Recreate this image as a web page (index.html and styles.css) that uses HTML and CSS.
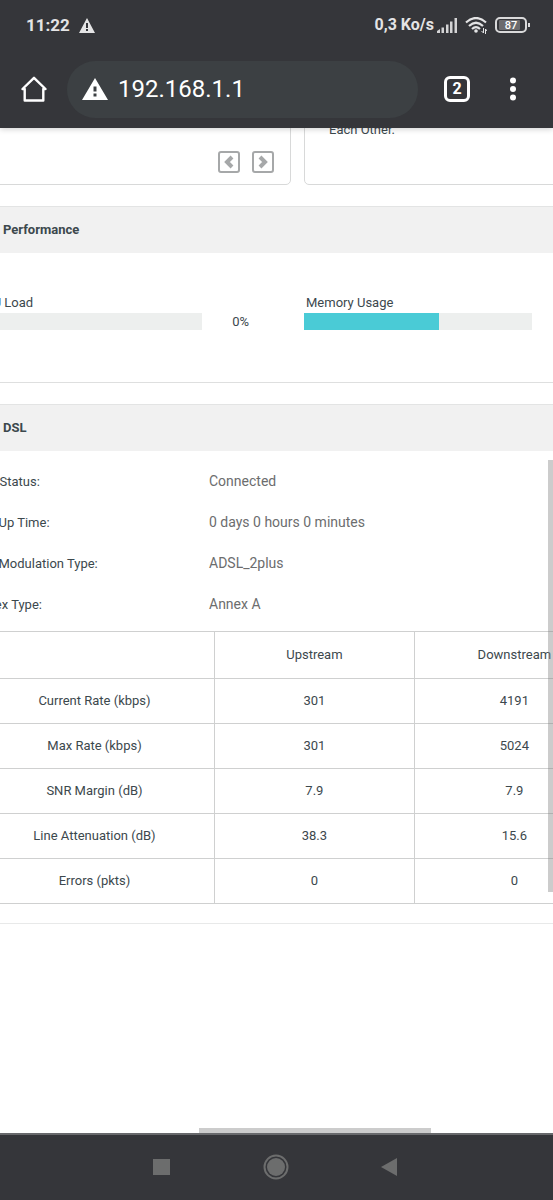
FILE: index.html
```html
<!DOCTYPE html>
<html lang="en">
  <head>
    <meta charset="UTF-8" />
    <meta name="viewport" content="width=device-width, initial-scale=1.0" />
    <title>192.168.1.1</title>
    <link rel="stylesheet" href="styles.css">
  </head>
  <body>
    <header class="browser">
      <div class="status-bar">
        <span>11:22</span>
        <svg class="status-warning" width="16" height="15" viewBox="0 0 16 15">
          <path fill="#e4e4e5" fill-rule="evenodd" d="M8 0 16 15H0zM7 5v5h2V5zM7 11v2h2v-2z" />
        </svg>
        <span class="speed">0,3 Ko/s</span>
        <svg class="signal" width="20" height="15" viewBox="0 0 20 15" fill="#d4d4d5">
          <path d="M0 15v-2l3-2v4zM4.500 9.500h2.500V15H4.500zM9 6.500h2.500V15H9zM13 3.500h2.500V15H13zM17.500 0H20v15h-2.500z" />
        </svg>
        <svg class="wifi" width="22" height="17" viewBox="0 0 22 17" fill="none" stroke="#e4e4e5" stroke-width="2.200">
          <path d="M1 5.500Q11-3.500 21 5.500M4 9Q11 2.500 18 9M7 12Q11 8.300 15 12" />
          <circle cx="11" cy="14" r="1.800" fill="#e4e4e5" stroke="none" />
          <path stroke-width="1" d="M18.500 11v5l-2-2M20.500 17v-5l1.500 2" />
        </svg>
        <svg class="battery" width="36" height="16" viewBox="0 0 36 16">
          <rect x="1" y="1" width="30" height="14" rx="4" fill="none" stroke="#d9d9da" stroke-width="2" />
          <rect x="4" y="3" width="21" height="10" rx="1" fill="#6b6b6e" />
          <path fill="#d9d9da" d="M33 6h2v4h-2z" />
          <text x="16" y="12" text-anchor="middle">87</text>
        </svg>
      </div>

      <div class="toolbar">
        <button class="icon-btn" aria-label="Home">
          <svg width="26" height="26" viewBox="0 0 26 26" fill="none" stroke="#fff" stroke-width="2.400" stroke-linejoin="round">
            <path d="M1.500 13 13 1.800 24.500 13H22.300V24.500H3.700V13z" />
          </svg>
        </button>
        <div class="address">
          <svg width="26" height="22" viewBox="0 0 26 22">
            <path fill="#fff" fill-rule="evenodd" d="M13 0 26 22H0zM11.500 8.500v5h3v-5zM11.500 15.500v3h3v-3z" />
          </svg>
          <input type="text" value="192.168.1.1" aria-label="Address" />
        </div>
        <button class="icon-btn tabs" aria-label="Open tabs">2</button>
        <button class="icon-btn" aria-label="More">
          <svg width="26" height="26" viewBox="0 0 26 26" fill="#fff">
            <circle cx="13" cy="4.500" r="3" />
            <circle cx="13" cy="13" r="3" />
            <circle cx="13" cy="21.500" r="3" />
          </svg>
        </button>
      </div>
    </header>

    <main class="viewport">
      <div class="page">
        <div class="cards">
          <div class="card pager">
            <button class="page-btn" aria-label="Previous">
              <svg width="22" height="22" viewBox="0 0 22 22" fill="none" stroke="#a6a8a9">
                <rect x="1" y="1" width="20" height="20" rx="2" stroke-width="2" />
                <path stroke-width="4" d="M14 6 9 11l5 5" />
              </svg>
            </button>
            <button class="page-btn" aria-label="Next">
              <svg width="22" height="22" viewBox="0 0 22 22" fill="none" stroke="#a6a8a9">
                <rect x="1" y="1" width="20" height="20" rx="2" stroke-width="2" />
                <path stroke-width="4" d="m8 6 5 5-5 5" />
              </svg>
            </button>
          </div>
          <div class="card">Each Other.</div>
        </div>

        <section>
          <h2>Performance</h2>
          <div class="usage-list">
            <div class="usage">
              <span class="usage-label">CPU Load</span>
              <div class="bar"></div>
              <span class="percent">0%</span>
            </div>
            <div class="usage">
              <span class="usage-label">Memory Usage</span>
              <div class="bar"><div class="fill" style="width: 59%"></div></div>
            </div>
          </div>
        </section>

        <section>
          <h2>DSL</h2>
          <dl>
            <dt>Line Status:</dt>
            <dd>Connected</dd>
            <dt>DSL Up Time:</dt>
            <dd>0 days 0 hours 0 minutes</dd>
            <dt>DSL Modulation Type:</dt>
            <dd>ADSL_2plus</dd>
            <dt>Annex Type:</dt>
            <dd>Annex A</dd>
          </dl>

          <table>
            <thead>
              <tr>
                <th class="name-col"></th>
                <th>Upstream</th>
                <th>Downstream</th>
              </tr>
            </thead>
            <tbody>
              <tr>
                <td>Current Rate (kbps)</td>
                <td>301</td>
                <td>4191</td>
              </tr>
              <tr>
                <td>Max Rate (kbps)</td>
                <td>301</td>
                <td>5024</td>
              </tr>
              <tr>
                <td>SNR Margin (dB)</td>
                <td>7.9</td>
                <td>7.9</td>
              </tr>
              <tr>
                <td>Line Attenuation (dB)</td>
                <td>38.3</td>
                <td>15.6</td>
              </tr>
              <tr>
                <td>Errors (pkts)</td>
                <td>0</td>
                <td>0</td>
              </tr>
            </tbody>
          </table>
        </section>
      </div>
      <div class="scroll-y"></div>
      <div class="scroll-x"></div>
    </main>

    <nav class="system-nav">
      <button class="icon-btn" aria-label="Recent apps">
        <svg width="26" height="26" viewBox="0 0 26 26" fill="#6c6d6d"><path d="M4 5h17v16H4z" /></svg>
      </button>
      <button class="icon-btn" aria-label="Home screen">
        <svg width="26" height="26" viewBox="0 0 26 26" fill="#6c6d6d">
          <circle cx="13" cy="13" r="11.500" fill="none" stroke="#6c6d6d" stroke-width="2" />
          <circle cx="13" cy="13" r="9" />
        </svg>
      </button>
      <button class="icon-btn" aria-label="Back">
        <svg width="26" height="26" viewBox="0 0 26 26" fill="#6c6d6d"><path d="M4 13 20 4v18z" /></svg>
      </button>
    </nav>
  </body>
</html>
```

FILE: styles.css
```css
* {
  box-sizing: border-box;
}

body {
  margin: 0;
  min-height: 100vh;
  display: flex;
  flex-direction: column;
  font-family: Roboto, "Liberation Sans", sans-serif;
  font-size: 13px;
  line-height: 20px;
  color: #3c484d;
  background: #fff;
}

svg {
  display: block;
}

button {
  padding: 0;
  border: none;
  background: none;
  font-family: inherit;
  cursor: pointer;
}

/* browser chrome */
.browser {
  position: relative;
  z-index: 1;
  background: #35363a;
  box-shadow: 0 1px 6px rgba(0, 0, 0, 0.2);
}

.status-bar {
  display: flex;
  align-items: center;
  height: 50px;
  padding: 0 22px 0 26px;
  color: #e4e4e5;
  font-size: 17px;
  font-weight: 700;
}

.status-warning {
  margin-left: 9px;
}

.speed {
  margin-left: auto;
  font-size: 16px;
}

.signal {
  margin-left: 3px;
}

.wifi {
  margin-left: 8px;
}

.battery {
  margin-left: 8px;
}

.battery text {
  fill: #fff;
  font-size: 11px;
  font-weight: 500;
}

.toolbar {
  display: flex;
  align-items: center;
  height: 78px;
  padding: 0 27px 0 21px;
}

.icon-btn {
  flex: none;
  width: 26px;
  height: 26px;
}

.address {
  flex: 1;
  display: flex;
  align-items: center;
  gap: 10px;
  min-width: 0;
  height: 57px;
  margin: 0 26px 0 20px;
  padding: 0 15px;
  border-radius: 29px;
  background: #3c4043;
}

.address svg {
  flex: none;
}

.address input {
  flex: 1;
  min-width: 0;
  padding: 0;
  border: none;
  outline: none;
  background: none;
  color: #fff;
  font-family: inherit;
  font-size: 24px;
}

.tabs {
  margin-right: 30px;
  border: 3px solid #fff;
  border-radius: 6px;
  color: #fff;
  font-size: 16px;
  font-weight: 700;
  line-height: 20px;
}

/* router page, scrolled a little to the right */
.viewport {
  flex: 1;
  position: relative;
  overflow: hidden;
}

.page {
  margin: 0 -68px 0 -26px;
  padding-bottom: 19px;
  border-bottom: 1px solid #e8e9e9;
}

.cards {
  display: grid;
  grid-template-columns: 1fr 1fr;
  gap: 13px;
  margin-top: -20px;
}

.card {
  height: 77px;
  padding: 11px 24px;
  border: 1px solid #d8d9d9;
  border-radius: 5px;
}

.pager {
  display: flex;
  justify-content: flex-end;
  align-items: flex-end;
  gap: 12px;
  padding-right: 16px;
}

.page-btn {
  width: 22px;
  height: 22px;
}

h2 {
  margin: 21px 0 0;
  height: 47px;
  padding-left: 29px;
  border-top: 1px solid #e3e4e4;
  background: #f1f1f1;
  font-size: 13px;
  font-weight: 700;
  line-height: 46px;
}

.usage-list {
  display: grid;
  grid-template-columns: 1fr 1fr;
  gap: 13px;
  padding: 40px 0 52px;
  border-bottom: 1px solid #dedfdf;
}

.usage {
  display: grid;
  grid-template-columns: 72% 1fr;
  column-gap: 30px;
}

.usage-label {
  grid-column: 1 / -1;
  padding-left: 2px;
}

.bar {
  height: 17px;
  background: #edefee;
}

.fill {
  height: 100%;
  background: #4acbd6;
}

.percent {
  line-height: 17px;
}

dl {
  display: grid;
  grid-template-columns: 237px 1fr;
  margin: 0 0 0 -2px;
  padding: 10px 0 6px;
  line-height: 41px;
}

dd {
  margin: 0;
  color: #6c6d6e;
  font-size: 14px;
}

table {
  width: 640px;
  border-collapse: collapse;
  table-layout: fixed;
}

th,
td {
  height: 45px;
  padding: 0;
  border-top: 1px solid #cfd0d0;
  border-bottom: 1px solid #cfd0d0;
  border-left: 1px solid #cfd0d0;
  font-weight: 400;
  text-align: center;
}

th {
  height: 47px;
}

.name-col {
  width: 240px;
}

.scroll-y,
.scroll-x {
  position: absolute;
  background: rgba(128, 128, 128, 0.4);
}

.scroll-y {
  top: 33%;
  right: 0;
  width: 5px;
  height: 43%;
}

.scroll-x {
  left: 36%;
  bottom: 0;
  width: 42%;
  height: 5px;
}

.system-nav {
  display: flex;
  justify-content: center;
  align-items: center;
  gap: 88px;
  height: 67px;
  padding: 0 2px 2px 0;
  border-top: 2px solid #68696c;
  background: #35363a;
}
```
